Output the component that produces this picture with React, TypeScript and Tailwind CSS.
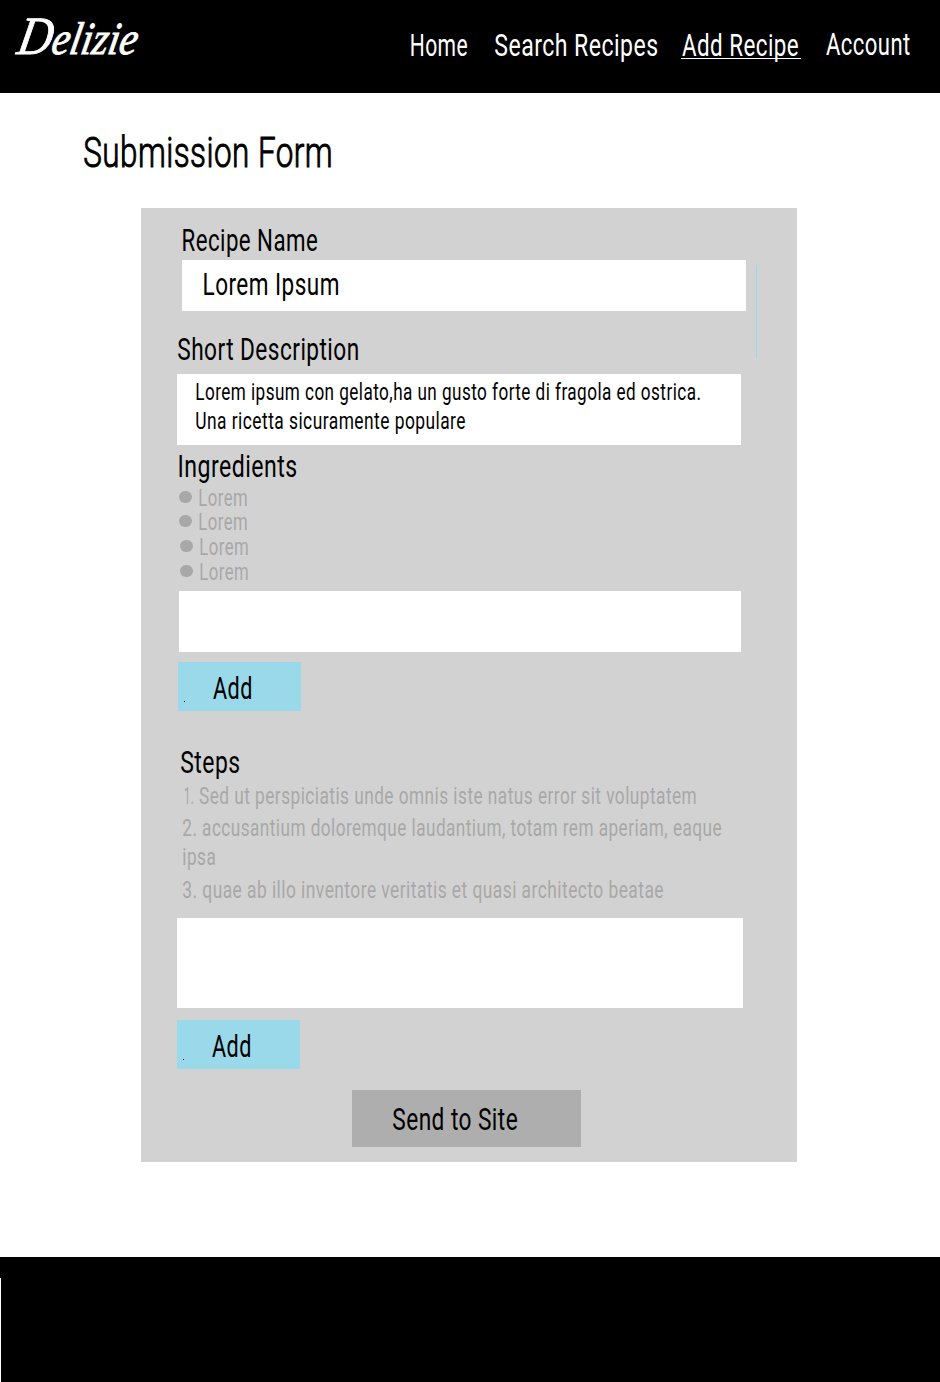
import { useLayoutEffect, useRef } from "react";

type FitProps = { text: string; className: string; as?: "span" | "h1" | "h2" | "p" };

/* Condenses one line of text horizontally so that it fills the width of its box. */
function Fit({ text, className, as: Tag = "span" }: FitProps) {
  const inner = useRef<HTMLSpanElement>(null);
  useLayoutEffect(() => {
    const el = inner.current;
    const box = el?.parentElement;
    const ctx = document.createElement("canvas").getContext("2d");
    if (!el || !box || !ctx) return;
    const style = getComputedStyle(el);
    ctx.font = `${style.fontStyle} ${style.fontWeight} ${style.fontSize} ${style.fontFamily}`;
    const m = ctx.measureText(text);
    const left = -m.actualBoundingBoxLeft;
    const spacing = (parseFloat(style.letterSpacing) || 0) * (text.length - 1);
    const width = m.actualBoundingBoxRight - left + spacing;
    const scale = box.clientWidth / width;
    el.style.transform = `translateX(${-left * scale}px) scaleX(${scale})`;
  }, [text]);
  return (
    <Tag className={`block shrink-0 whitespace-nowrap ${className}`}>
      <span ref={inner} className="inline-block origin-left align-top">
        {text}
      </span>
    </Tag>
  );
}

const ingredients = [
  { row: "ml-[38px] mt-[5px]" },
  { row: "ml-[38px]" },
  { row: "ml-[39px] mt-px" },
  { row: "ml-[39px] mt-px" },
];

export default function App() {
  return (
    <div className="flex h-[1382px] w-[940px] flex-col overflow-hidden bg-white font-['Roboto',sans-serif] font-normal tracking-[0.04em] text-black">
      <header className="flex h-[93px] shrink-0 items-start bg-black text-[32px] leading-[32px] text-white">
        <div className="ml-4 mt-[8px] w-[123px] shrink-0 whitespace-nowrap font-['Brush_Script_MT','Liberation_Serif',cursive] text-[46px] italic leading-[56px] tracking-normal [-webkit-text-stroke:0.9px_white]">
          <span className="block origin-[0_44px] -skew-x-12 scale-x-[0.88] first-letter:text-[54px]">Delizie</span>
        </div>
        <nav className="ml-[272px] flex items-start pt-[29px]">
          <Fit text="Home" className="w-[56px]" />
          <Fit text="Search Recipes" className="ml-[28px] w-[162px]" />
          <div className="ml-6 h-[30px] w-[120px] border-b border-white">
            <Fit text="Add Recipe" className="ml-px w-[116px]" />
          </div>
          <Fit text="Account" className="-mt-px ml-[25px] w-[84px]" />
        </nav>
      </header>

      <main className="flex h-[1164px] shrink-0 flex-col items-start">
        <Fit
          as="h1"
          text="Submission Form"
          className="ml-[84px] mt-[39px] w-[247px] text-[42px] font-[300] leading-[42px] [-webkit-text-stroke:1px_black]"
        />

        <form className="relative ml-[141px] mt-[34px] flex h-[954px] w-[656px] flex-col items-start bg-[#d2d2d2] text-[32px] leading-[32px]">
          <Fit as="h2" text="Recipe Name" className="ml-[42px] mt-4 w-[134px]" />
          <div className="ml-[41px] mt-1 h-[51px] w-[564px] shrink-0 bg-white pl-[22px] pt-2">
            <Fit text="Lorem Ipsum" className="w-[134px]" />
          </div>
          <div className="absolute left-[615px] top-[57px] h-[93px] w-px bg-[#99d9ea]" />

          <Fit as="h2" text="Short Description" className="ml-[37px] mt-[22px] w-[180px]" />
          <div className="ml-9 mt-[9px] h-[71px] w-[564px] shrink-0 bg-white pl-[19px] pt-1.5 text-[24px] leading-[24px]">
            <Fit text="Lorem ipsum con gelato,ha un gusto forte di fragola ed ostrica." className="w-[504px]" />
            <Fit text="Una ricetta sicuramente populare" className="mt-[5px] w-[269px]" />
          </div>

          <Fit as="h2" text="Ingredients" className="ml-[38px] mt-[5px] w-[117px]" />
          <ul className="mt-[-1px] shrink-0 text-[24px] leading-[24px] text-[#a8a8a8]">
            {ingredients.map((item, i) => (
              <li key={i} className={`flex items-start ${item.row}`}>
                <span className="mt-[5px] h-3 w-[13px] rounded-full bg-[#a8a8a8]" />
                <Fit text="Lorem" className="ml-[7px] w-[48px]" />
              </li>
            ))}
          </ul>
          <div className="ml-[38px] mt-[7px] h-[61px] w-[562px] shrink-0 bg-white" />
          <button type="button" className="ml-[37px] mt-2.5 flex h-[49px] w-[123px] shrink-0 items-start bg-[#99d9ea]">
            <span className="ml-1.5 mt-[39px] h-px w-px bg-black" />
            <Fit text="Add" className="ml-[28px] mt-[10px] w-[38px] text-left" />
          </button>

          <Fit as="h2" text="Steps" className="ml-10 mt-[35px] w-[58px]" />
          <div className="ml-[42px] mt-[6px] shrink-0 text-[24px] leading-[24px] text-[#a8a8a8]">
            <p className="flex">
              <Fit text="1." className="ml-[2px] w-[8px]" />
              <Fit text="Sed ut perspiciatis unde omnis iste natus error sit voluptatem" className="ml-[6px] w-[497px]" />
            </p>
            <Fit as="p" text="2. accusantium doloremque laudantium, totam rem aperiam, eaque" className="mt-2 w-[538px]" />
            <Fit as="p" text="ipsa" className="mt-[5px] w-[32px]" />
            <Fit as="p" text="3. quae ab illo inventore veritatis et quasi architecto beatae" className="mt-[9px] w-[480px]" />
          </div>
          <div className="ml-9 mt-4 h-[90px] w-[566px] shrink-0 bg-white" />
          <button type="button" className="ml-9 mt-3 flex h-[49px] w-[123px] shrink-0 items-start bg-[#99d9ea]">
            <span className="ml-1.5 mt-[39px] h-px w-px bg-black" />
            <Fit text="Add" className="ml-[28px] mt-[10px] w-[38px] text-left" />
          </button>
          <button type="submit" className="ml-[211px] mt-[21px] flex h-[57px] w-[229px] shrink-0 items-start bg-[#aeaeae]">
            <Fit text="Send to Site" className="ml-[41px] mt-[13px] w-[124px] text-left" />
          </button>
        </form>
      </main>

      <footer className="flex h-[125px] shrink-0 items-end bg-black">
        <div className="h-[104px] w-px bg-white" />
      </footer>
    </div>
  );
}
